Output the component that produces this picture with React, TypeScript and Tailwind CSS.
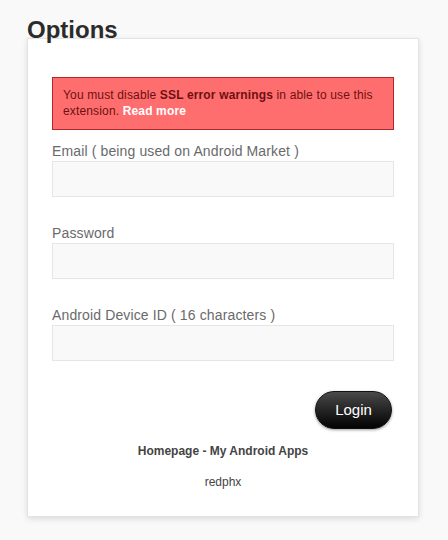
export default function App() {
  const font = { fontFamily: '"Liberation Sans", Arial, sans-serif' };
  return (
    <div className="min-h-[540px] w-[448px] bg-[#f9f9f9] pt-[18px] pl-[27px]" style={font}>
      <h1 className="relative z-10 -mb-[4px] text-[24px] font-bold leading-none text-[#2b2b2b]">Options</h1>
      <div className="w-[392px] border border-[#e3e3e3] bg-white px-6 pt-[38px] pb-[26px] shadow-[0_2px_6px_rgba(0,0,0,0.12)]">
        <div className="border border-[#b3262a] bg-[#ff6e6e] px-[10px] pt-[9px] pb-[10px] text-[12px] leading-[16px] tracking-[0.15px] text-[#6e1010]">
          You must disable <b>SSL error warnings</b> in able to use this extension.{' '}
          <a className="font-bold text-white">Read more</a>
        </div>

        <label className="mt-[12px] block text-[14px] leading-[18px] tracking-[0.13px] text-[#6a6a6a]">Email ( being used on Android Market )</label>
        <input className="mt-px block h-[36px] w-full border border-[#e6e6e6] bg-[#f9f9f9] outline-none" />

        <label className="mt-[27px] block text-[14px] leading-[18px] tracking-[0.13px] text-[#6a6a6a]">Password</label>
        <input type="password" className="mt-px block h-[36px] w-full border border-[#e6e6e6] bg-[#f9f9f9] outline-none" />

        <label className="mt-[27px] block text-[14px] leading-[18px] tracking-[0.13px] text-[#6a6a6a]">Android Device ID ( 16 characters )</label>
        <input className="mt-px block h-[36px] w-full border border-[#e6e6e6] bg-[#f9f9f9] outline-none" />

        <div className="mt-[30px] flex justify-end pr-[2px]">
          <button className="h-[38px] w-[77px] rounded-full border border-[#111] bg-gradient-to-b from-[#4a4a4a] to-[#050505] text-[15px] text-white shadow-[0_1px_3px_rgba(0,0,0,0.4)]">
            Login
          </button>
        </div>

        <p className="mt-[14px] text-center text-[12px] leading-[16px] font-bold text-[#444]">Homepage - My Android Apps</p>
        <p className="mt-[15px] text-center text-[12px] leading-[16px] text-[#444]">redphx</p>
      </div>
    </div>
  );
}
